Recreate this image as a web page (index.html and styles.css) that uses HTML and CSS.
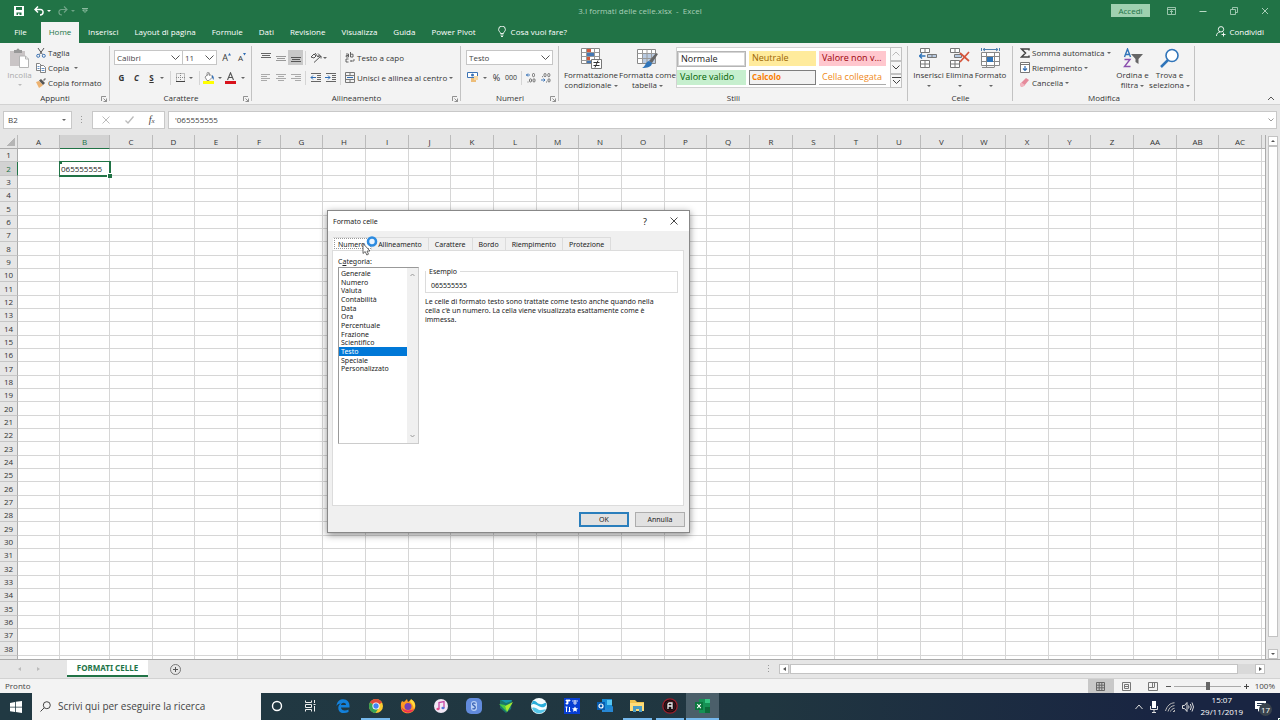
FILE: index.html
```html
<!DOCTYPE html>
<html lang="it">
<head>
<meta charset="utf-8">
<title>3.I formati delle celle.xlsx - Excel</title>
<link rel="stylesheet" href="styles.css">
</head>
<body>
<header class="titlebar">
  <div class="quick">
    <button class="ghost" aria-label="Salva"><svg width="10" height="10" viewBox="0 0 10 10"><path d="M0 0h10v10H0z" fill="#fff"/><path d="M2 1h6v3H2zM2.500 6.500h5V9h-2V7.500H4V9H2.500z" fill="#217346"/></svg></button>
    <button class="ghost" aria-label="Annulla"><svg width="10" height="10" viewBox="0 0 10 10" fill="none" stroke="#fff" stroke-width="1.500"><path d="M4 .5L1 3.500l3 3M1 3.500h5.500c3.500 0 3.500 5.500-.5 5.500"/></svg></button>
    <span class="caret light"></span>
    <button class="ghost faded" aria-label="Ripeti"><svg width="10" height="10" viewBox="0 0 10 10" fill="none" stroke="#fff" stroke-width="1.200"><path d="M6 .5l3 3-3 3M9 3.500H3.500C0 3.500 0 9 4 9"/></svg></button>
    <span class="caret light faded"></span>
    <button class="ghost custom" aria-label="Personalizza"><svg width="6" height="5" viewBox="0 0 6 5" fill="none" stroke="#a6cdb5" stroke-width=".8"><path d="M0 .5h6M.7 2h4.600L3 4.500z"/></svg></button>
  </div>
  <div class="doc-title">3.I formati delle celle.xlsx&nbsp; -&nbsp; Excel</div>
  <div class="window-tools">
    <button class="signin">Accedi</button>
    <button class="ghost" aria-label="Opzioni barra multifunzione"><svg width="9" height="8" viewBox="0 0 9 8" fill="none" stroke="#b9d9c5" stroke-width=".8"><path d="M.5.5h8v7h-8zM.5 2.500h8M4.500 7V3.700M3 5l1.500-1.500L6 5"/></svg></button>
    <button class="ghost" aria-label="Riduci a icona"><svg width="8" height="8" viewBox="0 0 8 8" stroke="#b9d9c5"><path d="M.5 4.500h7"/></svg></button>
    <button class="ghost" aria-label="Ripristina"><svg width="8" height="8" viewBox="0 0 8 8" fill="none" stroke="#b9d9c5" stroke-width=".8"><path d="M.5 2.500h5v5h-5zM2.500 2.500v-2h5v5h-2"/></svg></button>
    <button class="ghost" aria-label="Chiudi"><svg width="8" height="8" viewBox="0 0 8 8" stroke="#b9d9c5" stroke-width=".9"><path d="M1 1l6 6M7 1L1 7"/></svg></button>
  </div>
</header>

<nav class="tabs">
  <button class="file">File</button><button class="current">Home</button><button>Inserisci</button><button>Layout di pagina</button><button>Formule</button><button>Dati</button><button>Revisione</button><button>Visualizza</button><button>Guida</button><button>Power Pivot</button>
  <button class="tell"><svg width="8" height="11" viewBox="0 0 8 11" fill="none" stroke="#fff" stroke-width=".9"><path d="M2.500 7.500C2.500 6 .6 5.500.6 3.500a3.400 3.400 0 0 1 6.800 0c0 2-1.900 2.500-1.900 4zM2.500 9h3M3 10.500h2"/></svg>Cosa vuoi fare?</button>
  <button class="share"><svg width="10" height="11" viewBox="0 0 10 11" fill="none" stroke="#fff" stroke-width=".9"><circle cx="5" cy="3.300" r="2.700"/><path d="M.5 10C.5 7.500 2 6.200 4 6M7.500 6.500v4M5.500 8.500h4"/></svg>Condividi</button>
</nav>

<section class="ribbon" aria-label="Home">
  <div class="group clipboard">
    <div class="body">
      <button class="big muted"><svg width="21" height="21" viewBox="0 0 21 21"><path d="M1 3h15v15H1z" fill="#c9c4c5"/><path d="M5 2h2.500a1.500 1.500 0 0 1 3 0H13v3H5z" fill="#999"/><path d="M10.500 8h6l3 3v8.500h-9z" fill="#fff" stroke="#b5b5b5"/><path d="M16.500 8v3h3" fill="none" stroke="#b5b5b5"/></svg><span>Incolla</span><i class="caret"></i></button>
      <div class="stack">
        <button class="cmd"><svg width="10" height="10" viewBox="0 0 10 10" fill="none"><path d="M2 0l4.500 6.500M8 0L3.500 6.500" stroke="#555"/><circle cx="2.200" cy="7.800" r="1.500" stroke="#3d74b5"/><circle cx="7.800" cy="7.800" r="1.500" stroke="#3d74b5"/></svg>Taglia</button>
        <button class="cmd"><svg width="10" height="10" viewBox="0 0 10 10" fill="#fff" stroke="#666" stroke-width=".8"><path d="M.5.5h3l2 2v5h-5z"/><path d="M4.500 2.500h3l2 2v5h-5z"/><path d="M5.500 5.500h3M5.500 7.500h3M1.500 3.500h2M1.500 5.500h2" stroke="#3d74b5"/></svg>Copia<i class="caret wide"></i></button>
        <button class="cmd"><svg width="10" height="10" viewBox="0 0 10 10"><path d="M0 4l3-1 4 4-1 1-3 2z" fill="#edb270"/><path d="M3 2.500L5 1l4 4-2 2z" fill="#555"/><path d="M7 2l2-2 1 1-2 2z" fill="#777"/></svg>Copia formato</button>
      </div>
    </div>
    <footer>Appunti<svg class="launch" width="6" height="6" viewBox="0 0 6 6"><use href="#launcher"/></svg></footer>
  </div>

  <div class="group font">
    <div class="body column">
      <div class="line selects">
        <label class="pick family"><select aria-label="Tipo di carattere"><option>Calibri</option></select><svg width="9" height="5" viewBox="0 0 9 5"><use href="#chev"/></svg></label>
        <label class="pick size"><select aria-label="Dimensione"><option>11</option></select><svg width="9" height="5" viewBox="0 0 9 5"><use href="#chev"/></svg></label>
        <button class="tool grow" aria-label="Aumenta dimensione">A<svg width="3" height="3" viewBox="0 0 3 3"><path d="M0 2.500L1.500 0 3 2.500z" fill="#2f6db5"/></svg></button>
        <button class="tool shrink" aria-label="Riduci dimensione">A<svg width="3" height="3" viewBox="0 0 3 3"><path d="M0 0h3L1.500 2.500z" fill="#2f6db5"/></svg></button>
      </div>
      <div class="line font-tools">
        <button class="tool"><b>G</b></button><button class="tool"><b><em>C</em></b></button><button class="tool"><b><u>S</u></b></button><i class="caret"></i><i class="rule"></i>
        <button class="tool" aria-label="Bordi"><svg width="9" height="9" viewBox="0 0 9 9" fill="none" stroke="#888" stroke-dasharray="1 1"><path d="M.5.5h8v8h-8zM4.500 0v9M0 4.500h9"/><path d="M0 8.500h9" stroke="#444" stroke-dasharray="none"/></svg></button><i class="caret"></i><i class="rule"></i>
        <button class="tool" aria-label="Colore riempimento"><svg width="12" height="12" viewBox="0 0 12 12"><path d="M2 5l4-3.500L9.500 5 6 8.500H4z" fill="#fff" stroke="#777" stroke-width=".8"/><path d="M4 4V1.500a1.200 1.200 0 0 1 2.400 0V4" fill="none" stroke="#777" stroke-width=".7"/><path d="M9 3c2 1 2 3 1.500 5L9 5.500z" fill="#2f6db5"/><path d="M0 9h11v3H0z" fill="#ff0"/></svg></button><i class="caret"></i>
        <button class="tool" aria-label="Colore carattere"><svg width="12" height="12" viewBox="0 0 12 12"><path d="M2.500 8L5.500.8 8.500 8M3.700 5.500h3.600" fill="none" stroke="#555" stroke-width="1.100"/><path d="M0 9h11v3H0z" fill="#d8121b"/></svg></button><i class="caret"></i>
      </div>
    </div>
    <footer>Carattere<svg class="launch" width="6" height="6" viewBox="0 0 6 6"><use href="#launcher"/></svg></footer>
  </div>

  <div class="group align">
    <div class="body">
      <div class="column">
        <div class="line align-tools">
          <button class="tool" aria-label="Allinea in alto"><svg width="10" height="10" viewBox="0 0 10 10" stroke="#666"><path d="M0 .5h10M1 2.500h8M0 4.500h10"/></svg></button>
          <button class="tool" aria-label="Allinea al centro"><svg width="10" height="10" viewBox="0 0 10 10" stroke="#999"><path d="M0 3.500h10M1 5.500h8M0 7.500h10"/></svg></button>
          <button class="tool pressed" aria-label="Allinea in basso"><svg width="10" height="10" viewBox="0 0 10 10" stroke="#555"><path d="M0 4.500h10M1 6.500h8M0 8.500h10"/></svg></button><i class="rule"></i>
          <button class="tool" aria-label="Orientamento"><svg width="12" height="11" viewBox="0 0 12 11" fill="none" stroke="#555"><path d="M1 5l3-3 2 2-2 2zM5 1l3 4 1.500-2L8 1.500M4 10.500L11 4M8.500 4H11v2.500"/></svg></button><i class="caret"></i>
        </div>
        <div class="line align-tools">
          <button class="tool" aria-label="Allinea a sinistra"><svg width="10" height="8" viewBox="0 0 10 8" stroke="#aaa"><path d="M0 .5h9M0 2.500h6M0 4.500h9M0 6.500h6"/></svg></button>
          <button class="tool" aria-label="Centra"><svg width="10" height="8" viewBox="0 0 10 8" stroke="#aaa"><path d="M0 .5h10M2 2.500h6M0 4.500h10M2 6.500h6"/></svg></button>
          <button class="tool" aria-label="Allinea a destra"><svg width="10" height="8" viewBox="0 0 10 8" stroke="#aaa"><path d="M0 .5h10M4 2.500h6M0 4.500h10M4 6.500h6"/></svg></button><i class="rule"></i>
          <button class="tool" aria-label="Riduci rientro"><svg width="12" height="9" viewBox="0 0 12 9" fill="none" stroke="#666"><path d="M1 .5h10M7 2.500h4M7 4.500h4M7 6.500h4M1 8.500h10"/><path d="M1 4.500h5M3 2.500l-2 2 2 2" stroke="#2f6db5"/></svg></button>
          <button class="tool" aria-label="Aumenta rientro"><svg width="12" height="9" viewBox="0 0 12 9" fill="none" stroke="#666"><path d="M1 .5h10M7 2.500h4M7 4.500h4M7 6.500h4M1 8.500h10"/><path d="M0 4.500h5M3 2.500l2 2-2 2" stroke="#2f6db5"/></svg></button>
        </div>
      </div>
      <div class="wrap-tools">
        <button class="cmd"><svg width="10" height="11" viewBox="0 0 10 11" fill="none" stroke="#555" stroke-width=".9"><path d="M1 2h2.500v3H1.200V3.500h2.300M5.500 0v5H8V2.200H5.500M3.500 7H1v3h2.500"/><path d="M9 7v2H5.500M6.500 8l-1 1 1 1" stroke="#666"/></svg>Testo a capo</button>
        <button class="cmd"><svg width="10" height="11" viewBox="0 0 10 11" fill="none" stroke="#777"><path d="M.5.5h9v10h-9zM.5 3.500h9M.5 7.500h9M5 0v3M5 8v3"/><path d="M2 5.500h6" stroke="#2f6db5"/></svg>Unisci e allinea al centro<i class="caret"></i></button>
      </div>
    </div>
    <footer>Allineamento<svg class="launch" width="6" height="6" viewBox="0 0 6 6"><use href="#launcher"/></svg></footer>
  </div>

  <div class="group number">
    <div class="body column">
      <div class="line selects"><label class="pick format"><select aria-label="Formato numero"><option>Testo</option></select><svg width="9" height="5" viewBox="0 0 9 5"><use href="#chev"/></svg></label></div>
      <div class="line number-tools">
        <button class="tool" aria-label="Formato contabilità"><svg width="12" height="11" viewBox="0 0 12 11"><path d="M.5.5h10v5H.5z" fill="#fff" stroke="#3d74b5"/><circle cx="5.500" cy="3" r="1.500" fill="#3d74b5"/><path d="M4 6h5v4H4z" fill="#edbd78"/><path d="M7 4h4v4H7z" fill="#f7d9a5"/></svg></button><i class="caret"></i>
        <button class="tool percent">%</button><button class="tool zeros">000</button><i class="rule"></i>
        <button class="tool" aria-label="Aumenta decimali"><svg width="10" height="10" viewBox="0 0 10 10" fill="none" stroke="#666" stroke-width=".9"><path d="M0 2h4M2 .5L.5 2 2 3.500" stroke="#2f6db5"/><rect x="6.500" y=".5" width="2" height="3.200" rx="1"/><rect x="3.500" y="5.800" width="2" height="3.200" rx="1"/><rect x="7" y="5.800" width="2" height="3.200" rx="1"/><path d="M1.500 9h1"/></svg></button>
        <button class="tool" aria-label="Diminuisci decimali"><svg width="10" height="10" viewBox="0 0 10 10" fill="none" stroke="#666" stroke-width=".9"><rect x="3" y=".5" width="2" height="3.200" rx="1"/><rect x="6.800" y=".5" width="2" height="3.200" rx="1"/><path d="M0 7h4M2.500 5.500L4 7 2.500 8.500" stroke="#2f6db5"/><rect x="7" y="5.800" width="2" height="3.200" rx="1"/><path d="M5 9h1M1 3.700h1"/></svg></button>
      </div>
    </div>
    <footer>Numeri<svg class="launch" width="6" height="6" viewBox="0 0 6 6"><use href="#launcher"/></svg></footer>
  </div>

  <div class="group styles">
    <div class="body">
      <button class="big"><svg width="21" height="21" viewBox="0 0 21 21"><path d="M.5.5h18v15H.5z" fill="#fff" stroke="#888"/><path d="M.5 4.500h18M.5 8.500h18M.5 12.500h18M5.500.5v15M13.500.5v15" stroke="#999" fill="none"/><path d="M6 1h4v3H6zM6 9h3v3H6z" fill="#d2593c"/><path d="M6 5h7v3H6zM6 13h4v2H6z" fill="#4478b5"/><path d="M10.500 11.500h10v9h-10z" fill="#fff" stroke="#777"/><path d="M12.500 14.500h6M12.500 17.500h6M17 12.500l-3 7" stroke="#333"/></svg><span>Formattazione</span><span>condizionale <i class="caret"></i></span></button>
      <button class="big"><svg width="21" height="21" viewBox="0 0 21 21"><path d="M.5 1.500h18v14H.5z" fill="#fff" stroke="#888"/><path d="M5 5h13v10H5z" fill="#b9cbe2"/><path d="M.5 5.500h18M.5 10.500h18M5.500 1.500v14M10 1.500v14M14.500 1.500v14" stroke="#999" fill="none"/><path d="M19 5l2 1-6 9-3-2z" fill="#666"/><path d="M12 13l3 2c0 4-5 5-10 5 4-2 3-6 7-7z" fill="#2f74b9"/></svg><span>Formatta come</span><span>tabella <i class="caret"></i></span></button>
      <div class="gallery">
        <button class="swatch normal">Normale</button><button class="swatch neutral">Neutrale</button><button class="swatch bad">Valore non v…</button>
        <button class="swatch good">Valore valido</button><button class="swatch calc">Calcolo</button><button class="swatch linked">Cella collegata</button>
        <div class="spin">
          <button aria-label="Su"><svg width="8" height="5" viewBox="0 0 8 5" fill="none" stroke="#bbb"><path d="M.5 4.500L4 1l3.500 3.500"/></svg></button>
          <button aria-label="Giù"><svg width="8" height="5" viewBox="0 0 8 5" fill="none" stroke="#444"><path d="M.5.5L4 4 7.500.5"/></svg></button>
          <button aria-label="Altro"><svg width="9" height="8" viewBox="0 0 9 8" fill="none" stroke="#444"><path d="M0 .5h9M1 3l3.500 3.500L8 3"/></svg></button>
        </div>
      </div>
    </div>
    <footer>Stili</footer>
  </div>

  <div class="group cells">
    <div class="body">
      <button class="big"><svg width="19" height="21" viewBox="0 0 19 21" fill="#fff" stroke="#777"><path d="M1.500.5h9v4h-9zM6 .5v4M1.500 12.500h9v7h-9zM6 12.500v7M1.500 16h9"/><path d="M8.500 6.500h9v3h-9z" fill="#b9cbe2"/><path d="M13 6.500v3"/><path d="M.5 8h6M3 5.500L.5 8 3 10.500" stroke="#2f74b9" stroke-width="1.300" fill="none"/></svg><span>Inserisci</span><span><i class="caret"></i></span></button>
      <button class="big"><svg width="20" height="21" viewBox="0 0 20 21" fill="#fff" stroke="#777"><path d="M.5.5h9v4h-9zM5 .5v4M.5 12.500h9v7h-9zM5 12.500v7M.5 16h9"/><path d="M4.500 6.500h7v3h-7z" fill="#b9cbe2"/><path d="M10 5l9 8M19 4l-9 10" stroke="#d5543a" stroke-width="1.700"/></svg><span>Elimina</span><span><i class="caret"></i></span></button>
      <button class="big"><svg width="20" height="21" viewBox="0 0 20 21" fill="#fff" stroke="#888"><path d="M.5 4.500h18v13H.5zM.5 8.500h18M.5 13.500h18M5.500 4.500v15M13.500 4.500v15M1 19.500h12"/><path d="M6 9h6v5H6z" fill="#2f74b9" stroke="none"/><path d="M2 1.500h15M4 0L2 1.500 4 3M15 0l2 1.500L15 3M.5 0v3M18.500 0v3" stroke="#4d7fae" fill="none"/></svg><span>Formato</span><span><i class="caret"></i></span></button>
    </div>
    <footer>Celle</footer>
  </div>

  <div class="group edit">
    <div class="body">
      <div class="stack">
        <button class="cmd"><svg width="10" height="10" viewBox="0 0 10 10" fill="none" stroke="#444" stroke-width="1.500"><path d="M9 2.500V1H1.500L5.500 5l-4 4H9V7.500"/></svg>Somma automatica<i class="caret"></i></button>
        <button class="cmd"><svg width="10" height="11" viewBox="0 0 10 11" fill="#fff" stroke="#777"><path d="M.5.5h9v10h-9zM.5 2.500h9"/><path d="M5 4v5M3 6.500l2 2 2-2" fill="none" stroke="#2f6db5" stroke-width="1.200"/></svg>Riempimento<i class="caret"></i></button>
        <button class="cmd"><svg width="10" height="9" viewBox="0 0 10 9"><path d="M0 6l6-6 3 2-5 6-3 1z" fill="#e58a9b"/><path d="M0 6l1.500-1.500L5 7 4 8 1 9z" fill="#f1b5c0"/></svg>Cancella<i class="caret"></i></button>
      </div>
      <button class="big"><svg width="20" height="21" viewBox="0 0 20 21" fill="none"><path d="M1.500 9L4.500 1l3 8M2.500 6.500h4" stroke="#2f74b9" stroke-width="1.400"/><path d="M1.500 11.500h5.500l-5.500 7h6" stroke="#8b4fae" stroke-width="1.400"/><path d="M8 6h12l-4.500 5v5l-3-2v-3z" fill="#666"/></svg><span>Ordina e</span><span>filtra <i class="caret"></i></span></button>
      <button class="big"><svg width="20" height="21" viewBox="0 0 20 21" fill="#fff" stroke="#2f74b9"><circle cx="12" cy="7.500" r="6" stroke-width="1.600"/><path d="M8 12l-7 7" stroke-width="2.500"/></svg><span>Trova e</span><span>seleziona <i class="caret"></i></span></button>
    </div>
    <footer>Modifica</footer>
  </div>
  <button class="ghost collapse" aria-label="Comprimi"><svg width="8" height="5" viewBox="0 0 8 5" fill="none" stroke="#555"><path d="M1 4l3-3 3 3"/></svg></button>
</section>

<section class="formula-bar">
  <label class="name-box"><input aria-label="Casella nome" value="B2"><i class="caret"></i></label>
  <svg class="dots" width="2" height="8" viewBox="0 0 2 8"><path d="M0 0h1v1H0zM0 3h1v1H0zM0 6h1v1H0z" fill="#999"/></svg>
  <div class="entry-tools">
    <button class="ghost" aria-label="Annulla immissione"><svg width="8" height="8" viewBox="0 0 8 8" stroke="#bbb"><path d="M.5.5l7 7M7.500.5l-7 7"/></svg></button>
    <button class="ghost" aria-label="Invio"><svg width="9" height="8" viewBox="0 0 9 8" fill="none" stroke="#bbb" stroke-width="1.300"><path d="M.5 4.500L3 7l5.500-6.500"/></svg></button>
    <button class="ghost fx">f<small>x</small></button>
  </div>
  <label class="formula"><input aria-label="Formula" value="'065555555"><svg width="6" height="4" viewBox="0 0 6 4" fill="none" stroke="#999"><path d="M.5.500L3 3 5.500.500"/></svg></label>
</section>

<main class="workbook">
  <div class="sheet"><table class="grid" id="grid"></table></div>
  <div class="vscroll">
    <button aria-label="Scorri su"><i class="tri up"></i></button>
    <div class="thumb"></div>
    <button aria-label="Scorri giù"><i class="tri down"></i></button>
  </div>
</main>

<div class="sheet-bar">
  <div class="sheet-nav"><i class="tri left pale"></i><i class="tri right pale"></i></div>
  <button class="sheet-tab">FORMATI CELLE</button>
  <button class="ghost add" aria-label="Nuovo foglio"><svg width="11" height="11" viewBox="0 0 11 11" fill="none" stroke="#777"><circle cx="5.500" cy="5.500" r="5"/><path d="M5.500 3v5M3 5.500h5" stroke="#555"/></svg></button>
  <svg class="dots" width="2" height="8" viewBox="0 0 2 8"><path d="M0 0h1v1H0zM0 3h1v1H0zM0 6h1v1H0z" fill="#999"/></svg>
  <div class="hscroll">
    <button aria-label="Scorri a sinistra"><i class="tri left"></i></button>
    <div class="thumb"></div>
    <button aria-label="Scorri a destra"><i class="tri right"></i></button>
  </div>
</div>

<footer class="status">
  <span>Pronto</span>
  <div class="views">
    <button class="on" aria-label="Normale"><svg width="9" height="9" viewBox="0 0 9 9" fill="none" stroke="#666"><path d="M.5.5h8v8h-8zM3.200 0v9M5.800 0v9M0 3.200h9M0 5.800h9"/></svg></button>
    <button aria-label="Layout di pagina"><svg width="9" height="9" viewBox="0 0 9 9" fill="none" stroke="#777"><path d="M.5.5h8v8h-8zM2.500 2.500h4v4h-4zM3 4.500h3"/></svg></button>
    <button aria-label="Anteprima interruzioni"><svg width="10" height="9" viewBox="0 0 10 9" fill="none" stroke="#777"><path d="M.5.5h9v8h-9zM.5 5.500h6M4.500 0v5M6.500 0v5"/></svg></button>
  </div>
  <div class="zoom"><button class="ghost" aria-label="Zoom indietro"><svg width="5" height="5" viewBox="0 0 5 5" stroke="#555"><path d="M0 2.500h5"/></svg></button><input type="range" min="0" max="200" value="102" aria-label="Zoom"><button class="ghost" aria-label="Zoom avanti"><svg width="5" height="5" viewBox="0 0 5 5" stroke="#444"><path d="M0 2.500h5M2.500 0v5"/></svg></button><output>100%</output></div>
</footer>

<nav class="taskbar">
  <button class="start" aria-label="Start"><svg width="12" height="12" viewBox="0 0 12 12" fill="#fff"><path d="M0 2l5-1v4.700H0zM5.800.8L12 0v5.700H5.800zM0 6.400h5V11l-5-.8zM5.800 6.400H12V12l-6.200-.9z"/></svg></button>
  <label class="search"><svg width="11" height="11" viewBox="0 0 11 11" fill="none" stroke="#444"><circle cx="6.800" cy="4.200" r="3.500"/><path d="M4.200 6.800L.5 10.500"/></svg><input aria-label="Cerca" placeholder="Scrivi qui per eseguire la ricerca"></label>
  <div class="apps">
    <button aria-label="Cortana"><svg width="16" height="16" viewBox="0 0 16 16"><circle cx="8" cy="8" r="4.500" fill="none" stroke="#fff" stroke-width="1.400"/></svg></button>
    <button aria-label="Visualizzazione attività"><svg width="16" height="16" viewBox="0 0 16 16" fill="none" stroke="#eee"><path d="M3.500 2.500v2h6v-2M3.500 6.500h6v3h-6zM3.500 13.500v-2h6v2M12.500 2v3M12.500 8v5.500M11.500 6.500h2"/></svg></button>
    <button aria-label="Edge"><svg width="16" height="16" viewBox="0 0 16 16"><path d="M1.500 8C2 3 5 1.300 8.300 1.300c4 0 6.200 3 6.200 6.700v1.500H6c.2 3.500 4.800 3.500 7.500 2V14c-4.500 2.300-10.500 1-10.200-4.500.1-2 1.200-3.200 2.500-4C3.800 5.800 2.300 6.700 1.500 8zM6 7h5c0-3.300-4.700-3-5 0z" fill="#1381db"/></svg></button>
    <button class="open" aria-label="Chrome"><svg width="16" height="16" viewBox="0 0 16 16"><circle cx="8" cy="8" r="7" fill="#f9cb31"/><path d="M8 8L1.900 4.500A7 7 0 0 1 14.100 4.500z" fill="#df4a3c"/><path d="M1.900 4.500A7 7 0 0 0 7.500 15L11 9.500 8 8z" fill="#35a356"/><circle cx="8" cy="8" r="3.600" fill="#fff"/><circle cx="8" cy="8" r="2.700" fill="#4284f3"/></svg></button>
    <button aria-label="Firefox"><svg width="16" height="16" viewBox="0 0 16 16"><path d="M1 5l1-2 2 1 3-3 1 3 3-2.500C15 3 16 7 15 10c-2 7-13 7-14 0-.3-2 0-3 0-5z" fill="#ff9a22"/><path d="M1 7c1 5 6 7 13 4-2 5-12 6-13-4z" fill="#ed3152"/><circle cx="8" cy="8.500" r="3.500" fill="#7441b8"/><path d="M11 1c4 3 5 6 3 10-1-4-2-6-4-7z" fill="#ffdc3d"/></svg></button>
    <button aria-label="iTunes"><svg width="16" height="16" viewBox="0 0 16 16"><circle cx="8" cy="8" r="7" fill="#f2e8f5"/><path d="M6 11V4.500l5-1V10" fill="none" stroke="#c848a5" stroke-width="1.300"/><ellipse cx="5" cy="11" rx="1.600" ry="1.200" fill="#e3518b"/><ellipse cx="10" cy="10" rx="1.600" ry="1.200" fill="#5377db"/></svg></button>
    <button aria-label="Sync"><svg width="16" height="16" viewBox="0 0 16 16"><rect width="16" height="16" rx="5" fill="#628bdc"/><rect x="5" y="3" width="6" height="10" rx="3" fill="#b9cff5"/><path d="M9.500 5.500C7 4 6 6 7 7l2 1.500c1 2-1 3-2.500 2" fill="none" stroke="#3761b5" stroke-width="1.300"/></svg></button>
    <button aria-label="Navigazione"><svg width="16" height="16" viewBox="0 0 16 16"><path d="M2 2h12l-1 9-5 4-6-5z" fill="#19766b"/><path d="M1 6l6 1 2 7z" fill="#47c944"/><path d="M7 8l8-4-6 10z" fill="#a7ed31"/><path d="M3 2l5 3 6-2-1-1z" fill="#1696ac"/></svg></button>
    <button aria-label="Onde"><svg width="16" height="16" viewBox="0 0 16 16"><circle cx="8" cy="8" r="8" fill="#f5fdff"/><path d="M2 3c3-1 4 3 7 3 3 1 5-2 6-1 1 3-2 5-5 4C6 8 4 4 0 7z" fill="#2aaedb"/><path d="M1 10c4-2 6 3 9 2 3 0 4-1 5-1-3 6-12 6-14-1z" fill="#55c6e8"/></svg></button>
    <button aria-label="Strumenti"><svg width="16" height="16" viewBox="0 0 16 16"><path d="M0 0h16v16H0z" fill="#073ed3"/><path d="M2 2h4v1H4v3H2V5h1V3H2zM8 3h6M9 5h4M11 2v5" fill="#fff" stroke="#fff" stroke-width=".8"/><path d="M2.500 9v5M5.500 9v5M1.500 9h2M4.500 13.500h2" stroke="#fff" fill="none"/><path d="M11 8.500l1 1.800h2l-1.500 1.400.5 2-2-1-2 1 .5-2L8 10.300h2z" fill="#fff"/></svg></button>
    <button aria-label="Outlook"><svg width="16" height="16" viewBox="0 0 16 16"><path d="M5 1h10v12H5z" fill="#168bd5"/><path d="M10 2h5v5h-5z" fill="#55c6f4"/><path d="M5 8l6 3 5-3v6H5z" fill="#2787d4"/><path d="M0 4h8v8H0z" fill="#075cae"/><circle cx="4" cy="8" r="2" fill="none" stroke="#fff" stroke-width="1.200"/></svg></button>
    <button class="open" aria-label="Esplora file"><svg width="16" height="16" viewBox="0 0 16 16"><path d="M1 2h5l2 2h7v9H1z" fill="#efc34f"/><path d="M1 5h14v8H1z" fill="#ffdd79"/><path d="M4 8h9v6h-3v-3H7v3H4z" fill="#4b9cc4"/></svg></button>
    <button class="open" aria-label="Registratore"><svg width="16" height="16" viewBox="0 0 16 16"><circle cx="8" cy="8" r="7.200" fill="#180e12" stroke="#9d1f2b" stroke-width="1.300"/><circle cx="8" cy="8" r="5" fill="none" stroke="#4b171d"/><path d="M6 11V6l1-1h3v6M6 8h4" fill="none" stroke="#eee" stroke-width="1.300"/></svg></button>
    <button class="open active" aria-label="Excel"><svg width="16" height="16" viewBox="0 0 16 16"><path d="M4 1h11v14H4z" fill="#169154"/><path d="M10 1h5v4h-5z" fill="#34c481"/><path d="M10 9h5v6h-5z" fill="#0d6c3a"/><path d="M0 4h8v8H0z" fill="#0b773e"/><path d="M2.200 6l3.600 4.200M5.800 6l-3.600 4.200" stroke="#fff" stroke-width="1.100"/></svg></button>
  </div>
  <div class="tray">
    <svg width="8" height="6" viewBox="0 0 8 6" fill="none" stroke="#ddd"><path d="M.5 5L4 1l3.500 4"/></svg>
    <svg width="8" height="12" viewBox="0 0 8 12"><path d="M2 0h4v7H2z" fill="#fff"/><path d="M.5 5v3.500h7V5M4 8.500V11M2 11.500h4" fill="none" stroke="#ddd"/></svg>
    <svg width="10" height="10" viewBox="0 0 10 10" fill="none" stroke="#bbb"><path d="M.5 9C2 4 5 1 9.500.8M3 9.500C4 6 6 4 9.500 3.500M5.500 9.500C6 8 7.500 6.500 9.500 6.300M8 9.500h1.500V8"/></svg>
    <svg width="12" height="10" viewBox="0 0 12 10" fill="none" stroke="#ddd"><path d="M.5 3.500h2l2.500-3v9l-2.500-3h-2zM6.500 3.500q1 1.500 0 3M8.300 2q2 3 0 6M10 .5q3 4.500 0 9"/></svg>
    <time><span>15:07</span><span>29/11/2019</span></time>
    <div class="notice"><svg width="11" height="11" viewBox="0 0 11 11"><path d="M0 0h11v8H5l-2 3V8H0z" fill="#fff"/><path d="M2 2.500h7M2 4.500h7" stroke="#253750"/></svg><span>17</span></div>
  </div>
</nav>

<div class="dialog" role="dialog" aria-label="Formato celle">
  <div class="dialog-title"><span>Formato celle</span><button class="ghost help">?</button><button class="ghost" aria-label="Chiudi"><svg width="8" height="8" viewBox="0 0 8 8" stroke="#333" stroke-width=".9"><path d="M.5.500l7 7M7.500.500l-7 7"/></svg></button></div>
  <div class="dialog-body">
    <div class="dialog-tabs" role="tablist"><button role="tab" class="chosen">Numero</button><button role="tab">Allineamento</button><button role="tab">Carattere</button><button role="tab">Bordo</button><button role="tab">Riempimento</button><button role="tab">Protezione</button></div>
    <div class="page">
      <div class="category">
        <span id="cat">C<u>a</u>tegoria:</span>
        <div class="listbox">
          <ul role="listbox" aria-labelledby="cat"><li role="option">Generale</li><li role="option">Numero</li><li role="option">Valuta</li><li role="option">Contabilità</li><li role="option">Data</li><li role="option">Ora</li><li role="option">Percentuale</li><li role="option">Frazione</li><li role="option">Scientifico</li><li role="option" aria-selected="true">Testo</li><li role="option">Speciale</li><li role="option">Personalizzato</li></ul>
          <div class="list-scroll"><svg width="5" height="4" viewBox="0 0 5 4" fill="none" stroke="#999"><path d="M.5 3l2-2 2 2"/></svg><svg width="5" height="4" viewBox="0 0 5 4" fill="none" stroke="#999"><path d="M.5 1l2 2 2-2"/></svg></div>
        </div>
      </div>
      <div class="detail">
        <fieldset><legend>Esempio</legend>065555555</fieldset>
        <p>Le celle di formato testo sono trattate come testo anche quando nella cella c'è un numero. La cella viene visualizzata esattamente come è immessa.</p>
      </div>
    </div>
    <div class="actions"><button class="default">OK</button><button>Annulla</button></div>
  </div>
  <svg class="pointer" width="16" height="20" viewBox="0 0 16 20"><circle cx="10" cy="5.500" r="4" fill="#e9f4ff" stroke="#2c8be0" stroke-width="2.600"/><path d="M1 7.500v10l2.200-2 1.600 3.500 1.700-.8L5 15h3z" fill="#fff" stroke="#444" stroke-width=".8"/></svg>
</div>

<svg class="defs" width="0" height="0" aria-hidden="true">
  <symbol id="chev" viewBox="0 0 9 5"><path d="M.5.5l4 4 4-4" fill="none" stroke="#555"/></symbol>
  <symbol id="launcher" viewBox="0 0 6 6"><path d="M.5 5V.5H5M2.500 2.500l3 3M5.500 2.500v3h-3" fill="none" stroke="#777" stroke-width=".8"/></symbol>
</svg>
<script src="grid.js"></script>
</body>
</html>
```
FILE: grid.js
```js
const grid = document.getElementById("grid");
const columnName = i => (i < 26 ? "" : "A") + String.fromCharCode(65 + (i % 26));
const columnCount = 30;
const rowCount = 39;
const values = { B2: "065555555" };
const selected = { column: 1, row: 2 };

let html = '<colgroup><col class="c-head">';
for (let c = 0; c < columnCount; c++) {
  const kind = c === 0 || (c > 1 && c % 3 === 0) ? "c-narrow" : c === 1 ? "c-wide" : "c-mid";
  html += `<col class="${kind}">`;
}
html += '</colgroup><thead><tr><th class="corner"></th>';
for (let c = 0; c < columnCount; c++) {
  html += `<th scope="col"${c === selected.column ? ' class="sel"' : ""}>${c < 29 ? columnName(c) : ""}</th>`;
}
html += "</tr></thead><tbody>";
for (let r = 1; r <= rowCount; r++) {
  html += `<tr><th scope="row"${r === selected.row ? ' class="sel"' : ""}>${r}</th>`;
  for (let c = 0; c < columnCount; c++) {
    const value = values[columnName(c) + r];
    html += value ? `<td class="active">${value}</td>` : "<td></td>";
  }
  html += "</tr>";
}
grid.innerHTML = html + "</tbody>";
```
FILE: styles.css
```css
* { box-sizing: border-box; }
body { margin: 0; height: 100vh; overflow: hidden; display: flex; flex-direction: column; position: relative; font: 8px/10px "Open Sans", "Noto Sans", sans-serif; color: #333; background: #e6e6e6; }
button, input, select { font: inherit; color: inherit; margin: 0; padding: 0; border: 0; background: none; border-radius: 0; outline: 0; }
button { white-space: nowrap; }
svg { display: block; flex: none; }
.defs { position: absolute; }
.ghost { display: grid; place-items: center; }
.faded { opacity: .35; }
.caret { display: inline-block; flex: none; width: 4px; height: 2px; border: 2px solid transparent; border-top-color: #666; border-bottom: 0; vertical-align: middle; }
.caret.light { border-top-color: #fff; }

/* title and tabs */
.titlebar { height: 22px; flex: none; background: #217346; display: grid; grid-template-columns: 1fr auto 1fr; align-items: center; color: #a9cfb8; padding-bottom: 1px; }
.quick { display: flex; align-items: center; gap: 3px; padding-left: 14px; }
.quick .ghost + .ghost { margin-left: 7px; }
.quick .caret + .ghost { margin-left: 4px; }
.window-tools { display: flex; justify-content: flex-end; align-items: center; gap: 23px; padding-right: 11px; }
.signin { width: 39px; height: 13px; background: #9fd0b0; color: #217346; margin-right: -6px; }
.tabs { height: 21px; flex: none; background: #217346; color: #fff; display: flex; padding-right: 8px; }
.tabs button { padding: 0 8px 2px; }
.tabs .file { width: 41px; }
.tabs .current { background: #f3f3f3; color: #217346; width: 38px; padding: 0 0 2px; margin-right: 1px; }
.tabs .tell, .tabs .share { display: flex; align-items: center; gap: 5px; }
.tabs .tell { margin-left: 6px; }
.tabs .share { margin-left: auto; gap: 3px; }

/* ribbon */
.ribbon { flex: none; height: 62px; display: flex; background: #f3f3f3; border-bottom: 1px solid #d2d2d2; color: #333; }
.group { flex: none; display: flex; flex-direction: column; position: relative; }
.group::after { content: ""; position: absolute; right: 0; top: 3px; bottom: 3px; border-right: 1px solid #c2c2c2; }
.group footer { position: relative; height: 11px; text-align: center; }
.launch { position: absolute; right: 3px; top: 3px; }
.body { flex: 1; display: flex; }
.column { display: flex; flex-direction: column; }
.clipboard { width: 110px; }
.font { width: 142px; }
.align { width: 209px; }
.number { width: 98px; }
.styles { width: 349px; }
.cells { width: 105px; }
.edit { width: 182px; }
.collapse { margin: auto 5px 3px auto; }
.big { display: flex; flex-direction: column; align-items: center; padding-top: 5px; }
.big svg { margin-bottom: 1px; }
.muted { color: #aaa; }
.muted .caret { margin-top: 4px; border-top-color: #bbb; }
.stack { display: flex; flex-direction: column; padding-top: 2px; }
.cmd { display: flex; align-items: center; gap: 2px; height: 15px; }
.cmd .wide { margin-left: 3px; }
.clipboard .body { padding-left: 5px; }
.clipboard .big { width: 29px; }
.clipboard .stack { padding-left: 2px; }
.line { display: grid; align-items: center; height: 15px; justify-items: center; }
.line + .line { margin-top: 5px; }
.tool { display: grid; place-items: center; height: 15px; }
.rule { width: 1px; height: 14px; background: #d5d5d5; }
.column > .line:first-child { margin-top: 7px; }
.font .body { padding-left: 4px; }
.selects { justify-content: start; justify-items: stretch; }
.font .selects { grid-template-columns: 69px 34px 19px 12px; }
.number .selects { grid-template-columns: 87px; }
.pick { position: relative; background: #fff; border: 1px solid #c6c6c6; height: 15px; display: flex; }
.pick + .pick { border-left: 0; }
.pick select { appearance: none; width: 100%; padding-left: 2px; font-size: 8px; color: #444; }
.pick svg { position: absolute; right: 2px; top: 4px; pointer-events: none; }
.grow, .shrink { grid-auto-flow: column; justify-content: center; align-items: start; font-size: 9px; line-height: 15px; }
.shrink { font-size: 8px; }
.grow svg, .shrink svg { margin-top: 3px; }
.font-tools { grid-template-columns: 15px 15px 15px 6px 10px 10px 12px 5px 13px 9px 14px 9px; }
.align .body { padding-left: 6px; }
.align-tools { grid-template-columns: 15px 15px 15px 5px 15px 15px; }
.pressed { width: 15px; background: #c8c8c8; }
.align-tools .caret { justify-self: start; }
.wrap-tools { margin-top: 7px; margin-left: 2px; padding-left: 4px; height: 35px; border-left: 1px solid #d5d5d5; display: flex; flex-direction: column; justify-content: space-between; }
.number .body { padding-left: 5px; }
.number-tools { grid-template-columns: 14px 9px 15px 14px 6px 14px 15px; }
.percent { font-size: 9px; }
.zeros { font-size: 7px; }
.styles .big:first-child { width: 60px; }
.styles .big { width: 53px; }
.styles .body { padding-left: 2px; }
.gallery { margin: 4px 6px 2px auto; width: 226px; height: 41px; background: #fff; border: 1px solid #d2d2d2; display: grid; grid-template-columns: 69px 67px 67px; grid-template-rows: 16px 15px; column-gap: 3px; row-gap: 3px; align-content: center; position: relative; font-size: 9px; line-height: 12px; }
.swatch { text-align: left; padding-left: 3px; height: 15px; }
.normal { border: 1px solid #b5b5b5; height: 16px; color: #222; outline: 1px solid #d5d5d5; outline-offset: -2px; }
.neutral { background: #ffeb9c; color: #9c6500; }
.bad { background: #ffc7ce; color: #9c0006; }
.good { background: #c6efce; color: #006100; }
.calc { background: #f2f2f2; color: #fa7d00; border: 1px solid #7f7f7f; padding-left: 2px; font-weight: bold; font-size: 8px; }
.linked { color: #ef8a22; border-bottom: 1px solid #ababab; }
.spin { position: absolute; right: -1px; top: -1px; bottom: -1px; width: 12px; display: flex; flex-direction: column; background: #f7f7f7; }
.spin button { flex: 1; border: 1px solid #c2c2c2; display: grid; place-items: center; }
.cells .body { padding-left: 5px; }
.cells .big { width: 31px; }
.edit .body { padding-left: 7px; }
.edit .stack { width: 94px; }
.edit .big { width: 37px; }

/* formula bar */
.formula-bar { flex: none; height: 30px; display: flex; align-items: flex-start; padding: 6px 3px 0; color: #444; }
.name-box, .entry-tools, .formula { height: 18px; background: #fff; border: 1px solid #c8c8c8; display: flex; align-items: center; }
.name-box { width: 69px; padding: 0 5px 0 4px; }
.name-box input, .formula input { flex: 1; min-width: 0; width: 0; }
.formula-bar .dots { margin: 5px 9px 0; }
.entry-tools { width: 73px; justify-content: space-around; padding: 0 2px; }
.fx { font-family: "Liberation Serif", serif; font-style: italic; display: block; font-size: 10px; }
.fx small { font-size: 7px; }
.formula { flex: 1; margin-left: 3px; padding: 0 2px 0 6px; }

/* worksheet */
.workbook { flex: 1; min-height: 0; display: flex; border-bottom: 1px solid #ababab; }
.sheet { flex: 1; min-width: 0; overflow: hidden; border-right: 1px solid #ababab; background: #fff; }
.grid { table-layout: fixed; border-collapse: separate; border-spacing: 0; width: 0; font-size: 8px; line-height: 12px; color: #333; }
.c-head { width: 18px; }
.c-narrow { width: 42px; }
.c-mid { width: 43px; }
.c-wide { width: 50px; }
.grid th, .grid td { padding: 0; border: solid #d6d6d6; border-width: 0 1px 1px 0; font-weight: normal; overflow: visible; white-space: nowrap; }
.grid th { background: #e6e6e6; }
.grid thead th { height: 14px; border-right-color: #bbb; border-bottom-color: #ababab; }
.grid tbody tr { height: 13px; }
.grid tbody tr:nth-child(3n + 2) { height: 14px; }
.grid tbody th { border-right-color: #ababab; border-bottom-color: #c6c6c6; }
.grid .sel { background: #d2d2d2; color: #217346; }
.grid thead .sel { border-bottom: 1px solid #217346; }
.grid tbody .sel { border-right: 1px solid #217346; }
.grid .corner { background: linear-gradient(135deg, transparent 50%, #b5b5b5 50%) 7px 3px / 8px 8px no-repeat #e6e6e6; }
.grid .active { border-color: #217346; box-shadow: 0 0 0 1px #217346; position: relative; padding-left: 1px; color: #222; }
.active::before { content: ""; position: absolute; left: 0; top: 0; border: 1px solid #217346; }
.active::after { content: ""; position: absolute; right: -3px; bottom: -3px; width: 4px; height: 4px; background: #217346; border: solid #fff; border-width: 1px 0 0 1px; }
.vscroll { width: 14px; padding: 1px 2px 0; display: flex; flex-direction: column; }
.vscroll button { height: 10px; }
.vscroll button, .hscroll button, .vscroll .thumb, .hscroll .thumb { background: #fff; border: 1px solid #c3c3c3; display: grid; place-items: center; flex: none; }
.vscroll .thumb { flex: 1; margin-bottom: 12px; }
.tri { width: 0; height: 0; border: 2px solid transparent; }
.tri.up { border-top: 0; border-bottom-color: #555; }
.tri.down { border-bottom: 0; border-top-color: #555; }
.tri.left { border-left: 0; border-right: 3px solid #555; }
.tri.right { border-right: 0; border-left: 3px solid #555; }
.tri.left.pale { border-right-color: #bbb; }
.tri.right.pale { border-left-color: #bbb; }
.sheet-bar { flex: none; height: 19px; display: flex; align-items: center; padding-right: 15px; border-bottom: 1px solid #d2d2d2; }
.sheet-nav { width: 67px; display: flex; gap: 16px; padding-left: 18px; }
.sheet-tab { align-self: flex-start; width: 81px; height: 17px; background: #fff; color: #217346; font-family: "Noto Sans", sans-serif; font-weight: bold; border-bottom: 2px solid #217346; }
.add { margin-left: 22px; }
.sheet-bar .dots { margin-left: auto; }
.hscroll { width: 486px; margin-left: 9px; height: 10px; display: flex; background: #d9d9d9; }
.hscroll button { width: 10px; }
.hscroll .thumb { flex: 1; margin: 0 17px 0 1px; }

/* status bar */
.status { flex: none; height: 14px; display: flex; align-items: center; background: #f3f3f3; padding: 0 5px; color: #444; }
.status > span { padding-bottom: 1px; }
.views { margin-left: auto; display: flex; align-self: stretch; }
.views button { width: 26px; display: grid; place-items: center; }
.views .on { background: #c8c8c8; }
.zoom { display: flex; align-items: center; gap: 3px; }
.zoom input { appearance: none; width: 67px; height: 9px; background: linear-gradient(#aaa, #aaa) center / 100% 1px no-repeat; }
.zoom input::-webkit-slider-thumb { appearance: none; width: 4px; height: 8px; background: #666; }
.zoom output { margin-left: 3px; }

/* taskbar */
.taskbar { flex: none; height: 27px; display: flex; background: linear-gradient(90deg, #213943 0, #203640 60%, #192542 90%); color: #fff; }
.start { width: 32px; display: grid; place-items: center; }
.search { width: 229px; background: #f3f3f3; display: flex; align-items: center; gap: 7px; padding-left: 8px; font-size: 10px; line-height: 15px; color: #444; }
.search input { flex: 1; min-width: 0; }
.search input::placeholder { color: #444; opacity: 1; }
.apps { width: 458px; display: flex; }
.apps button { flex: 1; display: grid; place-items: center; border-bottom: 2px solid transparent; }
.apps .open { border-image: linear-gradient(90deg, transparent 10%, #76b9ed 10%, #76b9ed 90%, transparent 90%) 1; border-width: 0 0 2px; }
.apps .active { background: #4b5f6a; border-image: linear-gradient(#76b9ed, #76b9ed) 1; }
.tray { margin-left: auto; display: flex; align-items: center; gap: 7px; padding-right: 14px; font-size: 8px; }
.tray time { display: flex; flex-direction: column; align-items: center; line-height: 12px; padding-bottom: 1px; }
.notice { position: relative; margin-left: 5px; }
.notice span { position: absolute; left: 4px; top: 2px; width: 13px; height: 13px; border-radius: 50%; background: #39434d; font-size: 8px; line-height: 13px; text-align: center; }

/* dialog */
.dialog { position: absolute; left: 327px; top: 210px; width: 363px; height: 323px; display: flex; flex-direction: column; background: #f0f0f0; border: 1px solid #888; box-shadow: 0 2px 7px rgba(0, 0, 0, .45); font: 7px/9px "Noto Sans", sans-serif; color: #222; }
.dialog-title { flex: none; height: 20px; background: #fff; display: flex; align-items: center; gap: 23px; padding: 0 11px 0 5px; }
.dialog-title span { margin-right: auto; }
.help { font-size: 9px; }
.dialog-body { flex: 1; display: flex; flex-direction: column; padding: 6px 4px 5px; }
.dialog-tabs { display: flex; height: 13px; padding-left: 1px; }
.dialog-tabs button { padding: 0 6px; border: 1px solid #dcdcdc; border-left: 0; border-bottom: 0; background: #f0f0f0; }
.dialog-tabs .chosen { padding: 0 6px 0 5px; background: #fff; outline: 1px dotted #999; outline-offset: -2px; }
.page { flex: 1; background: #fff; border: 1px solid #dcdcdc; display: flex; padding: 6px 5px 0; gap: 6px; margin-right: 1px; }
.category { width: 81px; }
.listbox { margin-top: 1px; height: 177px; border: 1px solid #999; border-right-color: #ccc; border-bottom-color: #ccc; display: flex; }
.listbox ul { flex: 1; height: 106px; margin: 0; padding: 1px 0; list-style: none; display: flex; flex-direction: column; line-height: 9px; }
.listbox li { flex: 1; min-height: 0; padding-left: 2px; }
.listbox [aria-selected] { background: #0078d7; color: #fff; }
.list-scroll { width: 11px; background: #f0f0f0; display: flex; flex-direction: column; align-items: center; justify-content: space-between; padding: 5px 0; }
.detail { flex: 1; padding-top: 10px; }
fieldset { margin: 0; border: 1px solid #dcdcdc; padding: 5px 5px 3px; height: 26px; }
legend { padding: 0 3px; margin-left: -5px; }
.detail p { margin: 4px 12px 0 0; }
.actions { display: flex; justify-content: flex-end; gap: 6px; padding-top: 6px; }
.actions button { width: 50px; height: 15px; background: #e1e1e1; border: 1px solid #adadad; }
.actions .default { border: 2px solid #2a7ebc; }
.pointer { position: absolute; left: 34px; top: 25px; }
```
